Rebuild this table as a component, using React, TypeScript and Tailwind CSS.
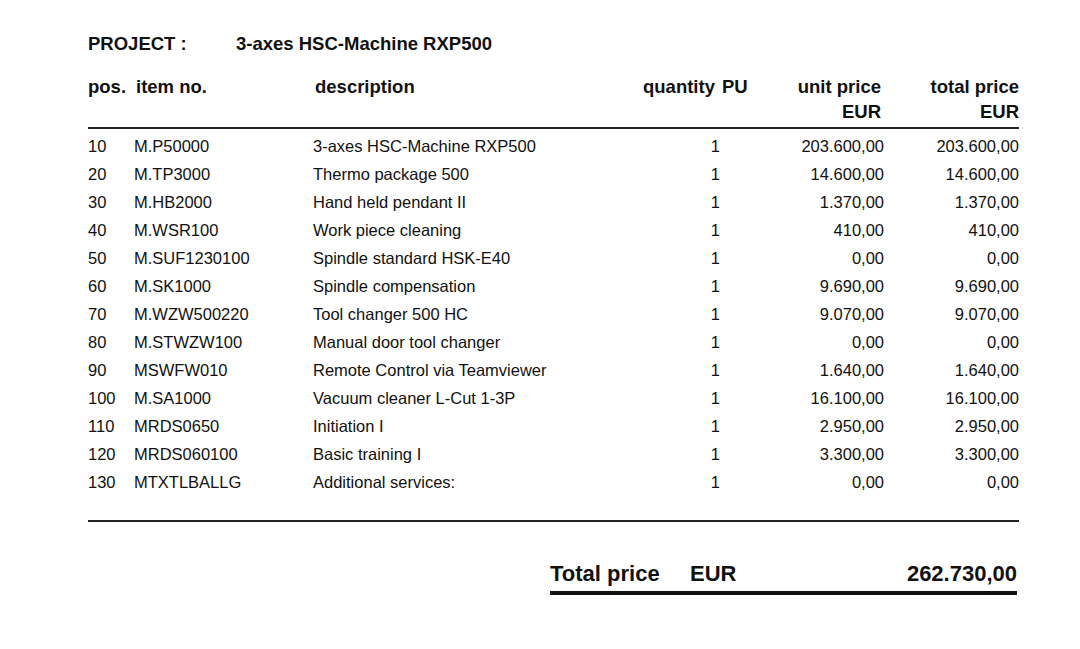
const rows: [string, string, string, string, string][] = [
  ["10", "M.P50000", "3-axes HSC-Machine RXP500", "203.600,00", "203.600,00"],
  ["20", "M.TP3000", "Thermo package 500", "14.600,00", "14.600,00"],
  ["30", "M.HB2000", "Hand held pendant II", "1.370,00", "1.370,00"],
  ["40", "M.WSR100", "Work piece cleaning", "410,00", "410,00"],
  ["50", "M.SUF1230100", "Spindle standard HSK-E40", "0,00", "0,00"],
  ["60", "M.SK1000", "Spindle compensation", "9.690,00", "9.690,00"],
  ["70", "M.WZW500220", "Tool changer 500 HC", "9.070,00", "9.070,00"],
  ["80", "M.STWZW100", "Manual door tool changer", "0,00", "0,00"],
  ["90", "MSWFW010", "Remote Control via Teamviewer", "1.640,00", "1.640,00"],
  ["100", "M.SA1000", "Vacuum cleaner L-Cut 1-3P", "16.100,00", "16.100,00"],
  ["110", "MRDS0650", "Initiation I", "2.950,00", "2.950,00"],
  ["120", "MRDS060100", "Basic training I", "3.300,00", "3.300,00"],
  ["130", "MTXTLBALLG", "Additional services:", "0,00", "0,00"],
];

// offer summary sheet: positions with unit / total price in EUR
export default function App() {
  return (
    <div className="h-[649px] w-[1080px] bg-white pl-[88px] pt-[33px] text-[#111] [font-family:'Liberation_Sans',Arial,sans-serif]">
      <div className="w-[931px]">
        <div className="flex text-[18.5px] leading-[22px] font-bold">
          <span className="w-[148px]">PROJECT :</span>
          <span>3-axes HSC-Machine RXP500</span>
        </div>

        {/* column header */}
        <div className="mt-[19px] grid grid-cols-[46px_179px_289px_118px_164px_135px] border-b-2 border-[#222] pb-[3px] text-[18.5px] leading-[25px] font-bold">
          <span>pos.</span>
          <span className="pl-[2px]">item no.</span>
          <span className="pl-[2px]">description</span>
          <span className="pl-[41px] whitespace-nowrap">
            quantity<span className="ml-[7px]">PU</span>
          </span>
          <span className="flex flex-col items-end pr-[3px]">
            <span>unit price</span>
            <span>EUR</span>
          </span>
          <span className="flex flex-col items-end">
            <span>total price</span>
            <span>EUR</span>
          </span>
        </div>

        <div className="pt-[3px] text-[16.5px] leading-[28px]">
          {rows.map(([pos, item, desc, unit, total]) => (
            <div key={pos} className="grid grid-cols-[46px_179px_289px_118px_164px_135px]">
              <span>{pos}</span>
              <span>{item}</span>
              <span>{desc}</span>
              <span className="text-right">1</span>
              <span className="text-right">{unit}</span>
              <span className="text-right">{total}</span>
            </div>
          ))}
        </div>

        <div className="mt-[24px] border-t-2 border-[#222]" />

        <div className="mt-[40px] ml-[462px] flex w-[467px] items-center border-b-4 border-[#111] pb-[5px] text-[22px] leading-[24px] font-bold">
          <span className="w-[140px]">Total price</span>
          <span>EUR</span>
          <span className="ml-auto">262.730,00</span>
        </div>
      </div>
    </div>
  );
}
